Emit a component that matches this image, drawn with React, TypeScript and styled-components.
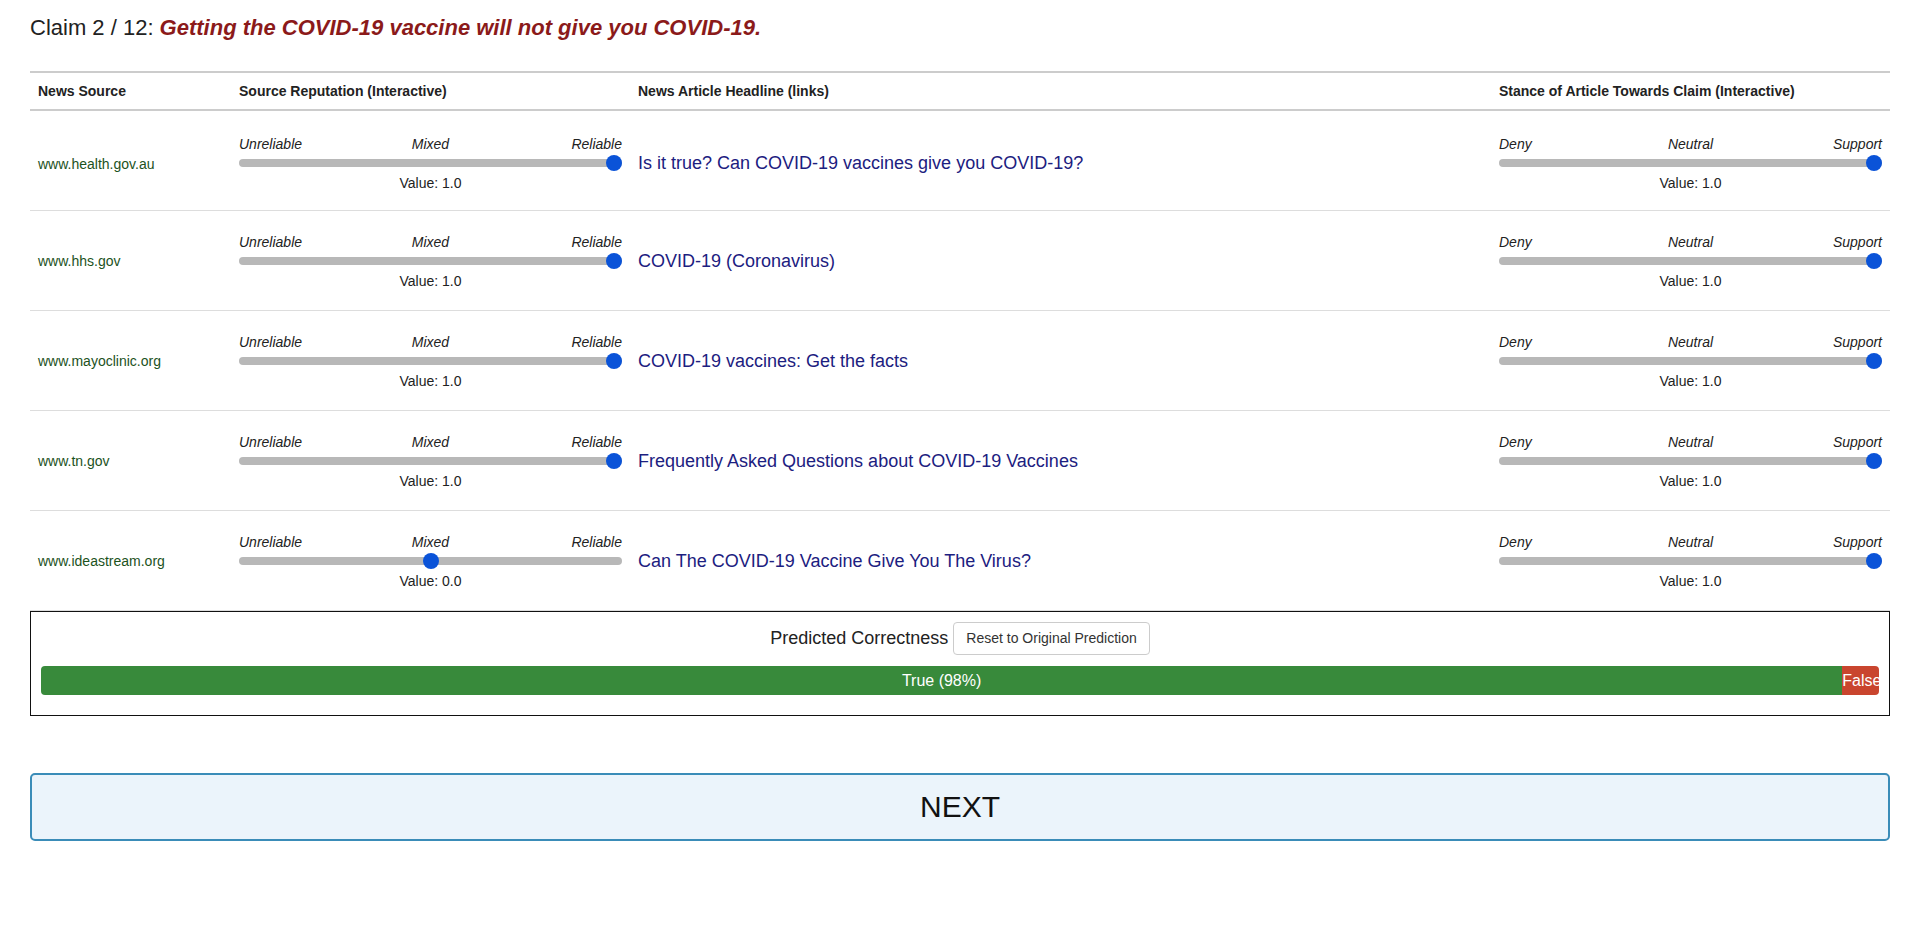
import React, { useState } from "react";
import styled, { createGlobalStyle } from "styled-components";

const GlobalStyle = createGlobalStyle`
  html, body {
    margin: 0;
    padding: 0;
    background: #ffffff;
    font-family: "Liberation Sans", Arial, Helvetica, sans-serif;
    color: #222222;
  }
  * { box-sizing: border-box; }
`;

const Page = styled.div`
  padding: 15px 30px 40px 30px;
`;

const Title = styled.div`
  font-size: 22px;
  line-height: 26px;
  color: #222;
  margin-bottom: 30px;
`;

const ClaimText = styled.span`
  font-weight: bold;
  font-style: italic;
  color: #8b1a1a;
`;

const Table = styled.div`
  display: flex;
  flex-direction: column;
`;

const HeaderRow = styled.div`
  display: grid;
  grid-template-columns: 201px 399px 1fr 399px;
  align-items: center;
  border-top: 2px solid #cccccc;
  border-bottom: 2px solid #cccccc;
  height: 40px;
`;

const Row = styled.div<{ $first?: boolean }>`
  display: grid;
  grid-template-columns: 201px 399px 1fr 399px;
  align-items: center;
  border-bottom: 1px solid #dddddd;
  height: 100px;
  padding-top: ${(p) => (p.$first ? "5px" : "0")};
`;

const HeadCell = styled.div`
  padding: 0 8px;
  font-size: 14px;
  line-height: 16px;
  font-weight: bold;
  color: #222;
`;

const Cell = styled.div`
  padding: 1px 8px 0 8px;
`;

const SourceLink = styled.a`
  font-size: 14px;
  line-height: 16px;
  color: #1c521c;
  text-decoration: none;
`;

const Headline = styled.a`
  font-size: 18px;
  line-height: 21px;
  color: #1c2080;
  text-decoration: none;
`;

const SliderBlock = styled.div`
  display: flex;
  flex-direction: column;
`;

const LabelRow = styled.div`
  display: grid;
  grid-template-columns: 1fr auto 1fr;
  font-size: 14px;
  line-height: 16px;
  font-style: italic;
  color: #222;
`;

const Label = styled.span<{ $align: "start" | "center" | "end" }>`
  justify-self: ${(p) => p.$align};
`;

const Range = styled.input`
  -webkit-appearance: none;
  appearance: none;
  width: 100%;
  height: 16px;
  margin: 3px 0 0 0;
  padding: 0;
  background: transparent;
  cursor: pointer;
  outline: none;

  &::-webkit-slider-runnable-track {
    height: 8px;
    background: #b8b8b8;
    border-radius: 4px;
  }
  &::-webkit-slider-thumb {
    -webkit-appearance: none;
    appearance: none;
    width: 16px;
    height: 16px;
    border-radius: 50%;
    background: #0a53d8;
    border: none;
    margin-top: -4px;
  }
  &::-moz-range-track {
    height: 8px;
    background: #b8b8b8;
    border-radius: 4px;
  }
  &::-moz-range-thumb {
    width: 16px;
    height: 16px;
    border-radius: 50%;
    background: #0a53d8;
    border: none;
  }
`;

const ValueText = styled.div`
  font-size: 14px;
  line-height: 16px;
  text-align: center;
  color: #222;
  margin-top: 4px;
`;

const PredBox = styled.div`
  border: 1px solid #111;
  padding: 10px 10px 0 10px;
`;

const PredHeader = styled.div`
  display: flex;
  justify-content: center;
  align-items: center;
  gap: 5px;
`;

const PredLabel = styled.span`
  font-size: 18px;
  line-height: 21px;
  color: #222;
`;

const ResetButton = styled.button`
  font-family: inherit;
  font-size: 14px;
  line-height: 19px;
  padding: 6px 12px;
  color: #333;
  background: #fff;
  border: 1px solid #cccccc;
  border-radius: 4px;
  cursor: pointer;
`;

const Bar = styled.div`
  display: flex;
  height: 29px;
  margin: 11px 0 20px 0;
  border-radius: 4px;
  overflow: hidden;
`;

const BarSeg = styled.div<{ $color: string }>`
  background: ${(p) => p.$color};
  color: #ffffff;
  font-size: 16px;
  line-height: 29px;
  text-align: center;
  white-space: nowrap;
  overflow: hidden;
`;

const NextButton = styled.button`
  display: block;
  width: 100%;
  height: 68px;
  margin-top: 57px;
  background: #ebf4fb;
  border: 2px solid #3a8cb8;
  border-radius: 5px;
  font-family: inherit;
  font-size: 30px;
  color: #111;
  cursor: pointer;
`;

type Article = {
  source: string;
  headline: string;
  reputation: number;
  stance: number;
};

const initial: Article[] = [
  { source: "www.health.gov.au", headline: "Is it true? Can COVID-19 vaccines give you COVID-19?", reputation: 1, stance: 1 },
  { source: "www.hhs.gov", headline: "COVID-19 (Coronavirus)", reputation: 1, stance: 1 },
  { source: "www.mayoclinic.org", headline: "COVID-19 vaccines: Get the facts", reputation: 1, stance: 1 },
  { source: "www.tn.gov", headline: "Frequently Asked Questions about COVID-19 Vaccines", reputation: 1, stance: 1 },
  { source: "www.ideastream.org", headline: "Can The COVID-19 Vaccine Give You The Virus?", reputation: 0, stance: 1 },
];

function Slider({
  labels,
  value,
  onChange,
}: {
  labels: [string, string, string];
  value: number;
  onChange: (v: number) => void;
}) {
  return (
    <SliderBlock>
      <LabelRow>
        <Label $align="start">{labels[0]}</Label>
        <Label $align="center">{labels[1]}</Label>
        <Label $align="end">{labels[2]}</Label>
      </LabelRow>
      <Range
        type="range"
        min={-1}
        max={1}
        step={0.1}
        value={value}
        onChange={(e) => onChange(parseFloat(e.target.value))}
      />
      <ValueText>Value: {value.toFixed(1)}</ValueText>
    </SliderBlock>
  );
}

export default function App() {
  const [rows, setRows] = useState<Article[]>(initial);

  const update = (i: number, key: "reputation" | "stance", v: number) => {
    setRows((r) => r.map((a, j) => (j === i ? { ...a, [key]: v } : a)));
  };

  const truePct = 98;

  return (
    <>
      <GlobalStyle />
      <Page>
        <Title>
          Claim 2 / 12: <ClaimText>Getting the COVID-19 vaccine will not give you COVID-19.</ClaimText>
        </Title>
        <Table>
          <HeaderRow>
            <HeadCell>News Source</HeadCell>
            <HeadCell>Source Reputation (Interactive)</HeadCell>
            <HeadCell>News Article Headline (links)</HeadCell>
            <HeadCell>Stance of Article Towards Claim (Interactive)</HeadCell>
          </HeaderRow>
          {rows.map((a, i) => (
            <Row key={a.source} $first={i === 0}>
              <Cell>
                <SourceLink href="#">{a.source}</SourceLink>
              </Cell>
              <Cell>
                <Slider
                  labels={["Unreliable", "Mixed", "Reliable"]}
                  value={a.reputation}
                  onChange={(v) => update(i, "reputation", v)}
                />
              </Cell>
              <Cell>
                <Headline href="#">{a.headline}</Headline>
              </Cell>
              <Cell>
                <Slider
                  labels={["Deny", "Neutral", "Support"]}
                  value={a.stance}
                  onChange={(v) => update(i, "stance", v)}
                />
              </Cell>
            </Row>
          ))}
        </Table>
        <PredBox>
          <PredHeader>
            <PredLabel>Predicted Correctness</PredLabel>
            <ResetButton onClick={() => setRows(initial)}>Reset to Original Prediction</ResetButton>
          </PredHeader>
          <Bar>
            <BarSeg $color="#388a3b" style={{ width: `${truePct}%` }}>
              True ({truePct}%)
            </BarSeg>
            <BarSeg $color="#c9452e" style={{ width: `${100 - truePct}%` }}>
              False
            </BarSeg>
          </Bar>
        </PredBox>
        <NextButton>NEXT</NextButton>
      </Page>
    </>
  );
}
